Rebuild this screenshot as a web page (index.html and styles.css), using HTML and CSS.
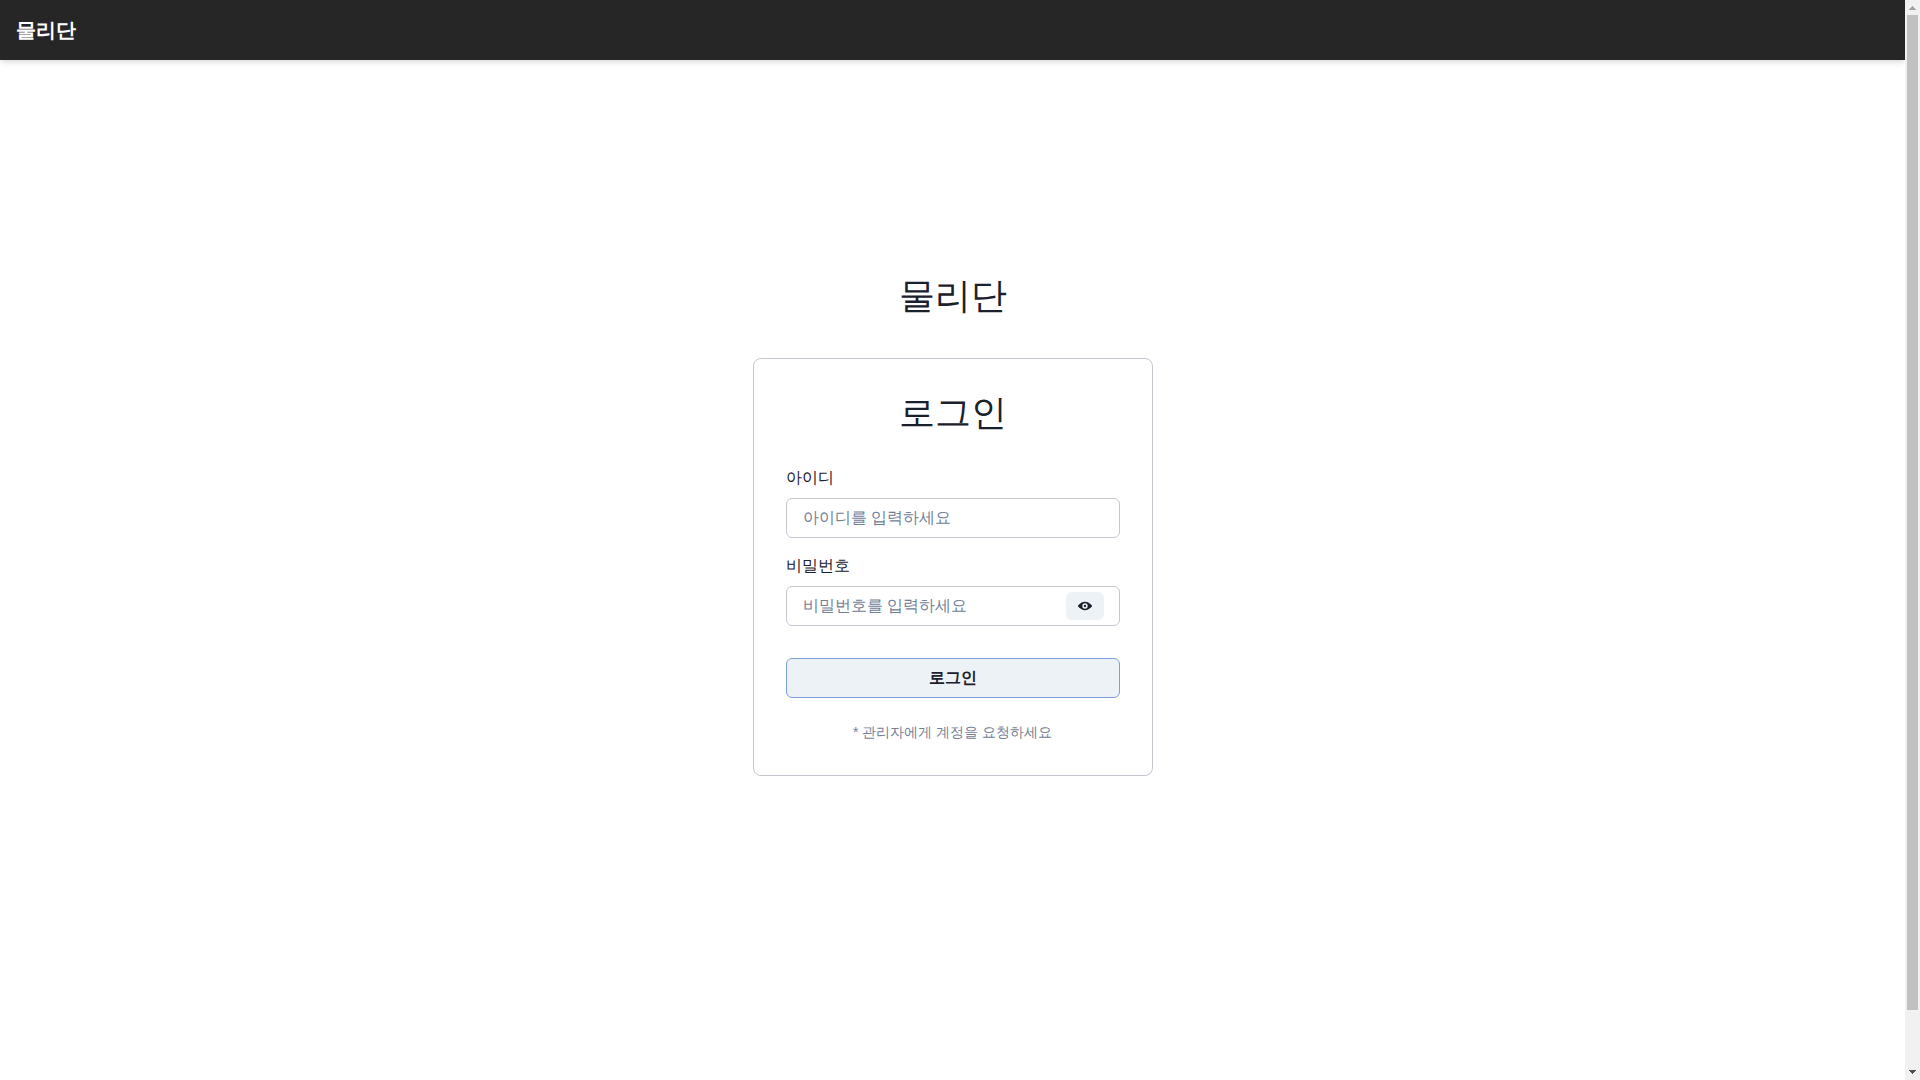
FILE: index.html
```html
<!DOCTYPE html>
<html lang="ko">
<head>
  <meta charset="utf-8">
  <meta name="viewport" content="width=device-width, initial-scale=1">
  <title>물리단</title>
  <link rel="stylesheet" href="styles.css">
</head>
<body class="window">
  <div class="page">
    <header class="header">
      <a class="brand" href="#">물리단</a>
    </header>
    <main class="main">
      <h1 class="title">물리단</h1>
      <section class="card">
        <h2 class="title">로그인</h2>
        <form class="form">
          <div class="field">
            <label class="label" for="user-id">아이디</label>
            <input class="input" id="user-id" type="text" placeholder="아이디를 입력하세요">
          </div>
          <div class="field">
            <label class="label" for="password">비밀번호</label>
            <div class="input-group">
              <input class="input" id="password" type="password" placeholder="비밀번호를 입력하세요">
              <button class="toggle" type="button" aria-label="비밀번호 보기">
                <svg class="icon" viewBox="0 0 24 24" aria-hidden="true">
                  <path d="M23.432,10.524C20.787,7.614,16.4,4.538,12,4.6,7.6,4.537,3.213,7.615.568,10.524a2.211,2.211,0,0,0,0,2.948C3.182,16.351,7.507,19.4,11.839,19.4h.308c4.347,0,8.671-3.049,11.288-5.929A2.21,2.21,0,0,0,23.432,10.524ZM7.4,12A4.6,4.6,0,1,1,12,16.6,4.6,4.6,0,0,1,7.4,12Z"/>
                  <circle cx="12" cy="12" r="2"/>
                </svg>
              </button>
            </div>
          </div>
          <button class="submit" type="submit">로그인</button>
        </form>
        <p class="note">* 관리자에게 계정을 요청하세요</p>
      </section>
    </main>
  </div>
  <div class="scrollbar" aria-hidden="true">
    <svg class="scroll-arrow scroll-arrow-up" viewBox="0 0 15 15" shape-rendering="crispEdges">
      <path d="M7 6h1v1h1v1h1v1h1v1H4V9h1V8h1V7h1z"/>
    </svg>
    <div class="scroll-track">
      <div class="scroll-thumb"></div>
    </div>
    <svg class="scroll-arrow" viewBox="0 0 15 15" shape-rendering="crispEdges">
      <path d="M4 5h7v1h-1v1H9v1H8v1H7V8H6V7H5V6H4z"/>
    </svg>
  </div>
</body>
</html>
```
FILE: styles.css
```css
*,
*::before,
*::after {
  box-sizing: border-box;
}

body {
  margin: 0;
  background: #fff;
  color: #1a202c;
  font-family: "Liberation Sans", sans-serif;
  font-size: 16px;
  line-height: 24px;
}

.window {
  display: flex;
  height: 100vh;
}

.page {
  flex: 1;
  min-width: 0;
  overflow-y: auto;
  scrollbar-width: none;
}

.header {
  position: sticky;
  top: 0;
  z-index: 10;
  display: flex;
  align-items: center;
  height: 60px;
  padding: 0 16px;
  background: #262626;
  box-shadow: 0 4px 6px -1px rgba(0, 0, 0, 0.1), 0 2px 4px -1px rgba(0, 0, 0, 0.06);
}

.brand {
  color: #fff;
  font-size: 20px;
  font-weight: 700;
  text-decoration: none;
}

.main {
  display: flex;
  flex-direction: column;
  align-items: center;
  gap: 41px;
  padding: 214px 16px 32px;
}

.title {
  margin: 0;
  font-size: 36px;
  font-weight: 400;
  line-height: 43px;
  text-align: center;
}

.card {
  width: 100%;
  max-width: 400px;
  padding: 32px;
  border: 1px solid #c2c7cf;
  border-radius: 8px;
}

.form {
  display: flex;
  flex-direction: column;
  gap: 16px;
  margin-top: 32px;
}

.field {
  display: flex;
  flex-direction: column;
  gap: 8px;
}

.input-group {
  position: relative;
}

.input {
  width: 100%;
  height: 40px;
  padding: 0 16px;
  border: 1px solid #c2c7d2;
  border-radius: 6px;
  background: #fff;
  color: inherit;
  font: inherit;
}

.input::placeholder {
  color: #718096;
}

.toggle {
  position: absolute;
  top: 6px;
  right: 16px;
  display: flex;
  align-items: center;
  justify-content: center;
  width: 38px;
  height: 28px;
  padding: 0;
  border: 0;
  border-radius: 6px;
  background: #edf2f7;
  color: inherit;
}

.icon {
  width: 14px;
  height: 14px;
  fill: currentColor;
}

.submit {
  height: 40px;
  margin-top: 16px;
  border: 1px solid #7ba0dc;
  border-radius: 6px;
  background: #edf2f7;
  color: inherit;
  font: inherit;
  font-weight: 700;
}

.note {
  margin: 24px 0 0;
  color: #718096;
  font-size: 14px;
  line-height: 21px;
  text-align: center;
}

.scrollbar {
  display: flex;
  flex-direction: column;
  width: 15px;
  background: #f1f1f1;
}

.scroll-arrow {
  width: 15px;
  height: 15px;
  fill: #505050;
}

.scroll-arrow-up {
  fill: #a3a3a3;
}

.scroll-track {
  flex: 1;
  padding: 0 2px;
}

.scroll-thumb {
  height: calc(100% * 18 / 19);
  background: #c1c1c1;
}
```
